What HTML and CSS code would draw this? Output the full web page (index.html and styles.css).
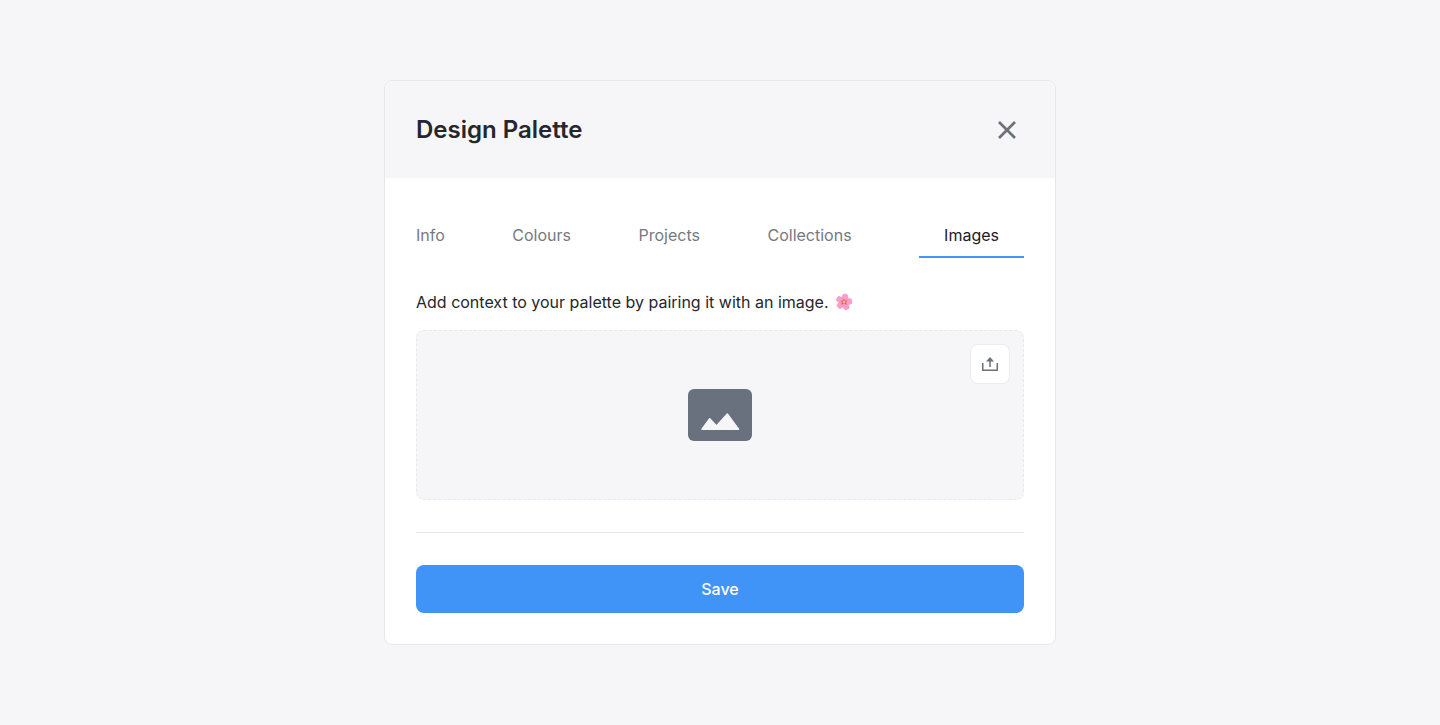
FILE: index.html
```
<!DOCTYPE html>
<html lang="en">
  <head>
    <meta charset="UTF-8" />
    <meta name="viewport" content="width=device-width, initial-scale=1" />
    <title>Design Palette</title>
    <link rel="stylesheet" href="styles.css">
  </head>

  <body>
    <main class="modal">
      <header class="modal-header">
        <h1>Design Palette</h1>
        <button class="close" type="button" aria-label="Close">
          <svg width="20" height="20" viewBox="0 0 20 20" fill="none" stroke="currentColor" stroke-width="2.700">
            <path d="M2 2l16 16M18 2L2 18" />
          </svg>
        </button>
      </header>

      <form class="modal-body">
        <div class="tabs" role="tablist">
          <button class="tab" type="button" role="tab">Info</button>
          <button class="tab" type="button" role="tab">Colours</button>
          <button class="tab" type="button" role="tab">Projects</button>
          <button class="tab" type="button" role="tab">Collections</button>
          <button class="tab active" type="button" role="tab" aria-selected="true">Images</button>
        </div>

        <p class="hint">
          Add context to your palette by pairing it with an image.
          <svg class="flower" width="18" height="18" viewBox="0 0 18 18" role="img" aria-label="Cherry blossom">
            <defs>
              <path id="petal" d="M9 9C6.400 7 5.400 4.200 6.600 2C7.100 1 8 .7 8.500 1.100L9 1.700L9.500 1.100C10 .7 10.900 1 11.400 2C12.600 4.200 11.600 7 9 9z" />
            </defs>
            <g fill="#fb9fc8" stroke="#f07fb2" stroke-width=".4" transform="rotate(12 9 9)">
              <use href="#petal" />
              <use href="#petal" transform="rotate(72 9 9)" />
              <use href="#petal" transform="rotate(144 9 9)" />
              <use href="#petal" transform="rotate(216 9 9)" />
              <use href="#petal" transform="rotate(288 9 9)" />
            </g>
            <path d="M9 5.500l1 2.200 2.400-.2-1.500 1.900.9 2.300L9 10.800l-2.800.9.900-2.300-1.500-1.900 2.400.2z" fill="#d8507c" />
            <circle cx="9" cy="9" r="1.500" fill="#f3c65a" />
          </svg>
        </p>

        <div class="dropzone">
          <svg width="64" height="52" viewBox="0 0 64 52">
            <rect width="64" height="52" rx="6" fill="#69717e" />
            <path d="M14 40.300L21.700 29.700L28.500 37L39.300 25L50.500 40.300Z" fill="#f6f6f8" stroke="#f6f6f8" stroke-width="1.500" stroke-linejoin="round" />
          </svg>
          <button class="upload" type="button" aria-label="Upload image">
            <svg width="16" height="14" viewBox="0 0 16 14" fill="none" stroke="currentColor" stroke-width="1.500">
              <path d="M.75 6v7.250h14.500V6M8 10V2" />
              <path d="M4 4.500L8 0l4 4.500z" fill="currentColor" stroke="none" />
            </svg>
          </button>
        </div>

        <hr />
        <button class="save" type="submit">Save</button>
      </form>
    </main>
  </body>
</html>
```

FILE: styles.css
```
* {
  box-sizing: border-box;
}
body {
  margin: 0;
  min-height: 100vh;
  display: flex;
  align-items: center;
  justify-content: center;
  background-color: #f6f6f8;
  color: #24272c;
  font-family: Inter, "Liberation Sans", sans-serif;
  font-size: 16px;
  line-height: 24px;
}
button {
  font: inherit;
  border: none;
  background: none;
  padding: 0;
  cursor: pointer;
}
svg {
  display: block;
}

/* Modal */
.modal {
  width: 100%;
  max-width: 672px;
  background-color: #fff;
  border: 1px solid #e6e7ea;
  border-radius: 8px;
  overflow: hidden;
}
.modal-header {
  display: flex;
  align-items: center;
  justify-content: space-between;
  padding: 33px 31px 32px;
  background-color: #f6f6f8;
}
.modal-header h1 {
  margin: 0;
  font-size: 24px;
  font-weight: 600;
  line-height: 32px;
}
.close {
  padding: 6px 7px;
  color: #6c717a;
}
.modal-body {
  padding: 32px 31px 31px;
}

/* Tabs */
.tabs {
  display: flex;
  justify-content: space-between;
}
.tab {
  height: 48px;
  padding-top: 3px;
  color: #747a82;
  border-bottom: 2px solid transparent;
}
.tab.active {
  padding: 3px 25px 0;
  color: #1d2025;
  border-bottom-color: #4299f5;
}

.hint {
  display: flex;
  align-items: center;
  gap: 6px;
  margin: 32px 0 16px;
}

/* Image upload */
.dropzone {
  position: relative;
  height: 170px;
  display: flex;
  align-items: center;
  justify-content: center;
  background-color: #f6f6f8;
  border: 1px dashed #e8e9eb;
  border-radius: 8px;
}
.upload {
  position: absolute;
  top: 13px;
  right: 13px;
  width: 40px;
  height: 40px;
  display: flex;
  align-items: center;
  justify-content: center;
  color: #6c717a;
  background-color: #fff;
  border: 1px solid #ebecef;
  border-radius: 8px;
}

hr {
  margin: 32px 0;
  border: none;
  border-top: 1px solid #e6e7ea;
}
.save {
  display: block;
  width: 100%;
  height: 48px;
  color: #fff;
  font-weight: 500;
  background-color: #4093f7;
  border-radius: 8px;
}
```
